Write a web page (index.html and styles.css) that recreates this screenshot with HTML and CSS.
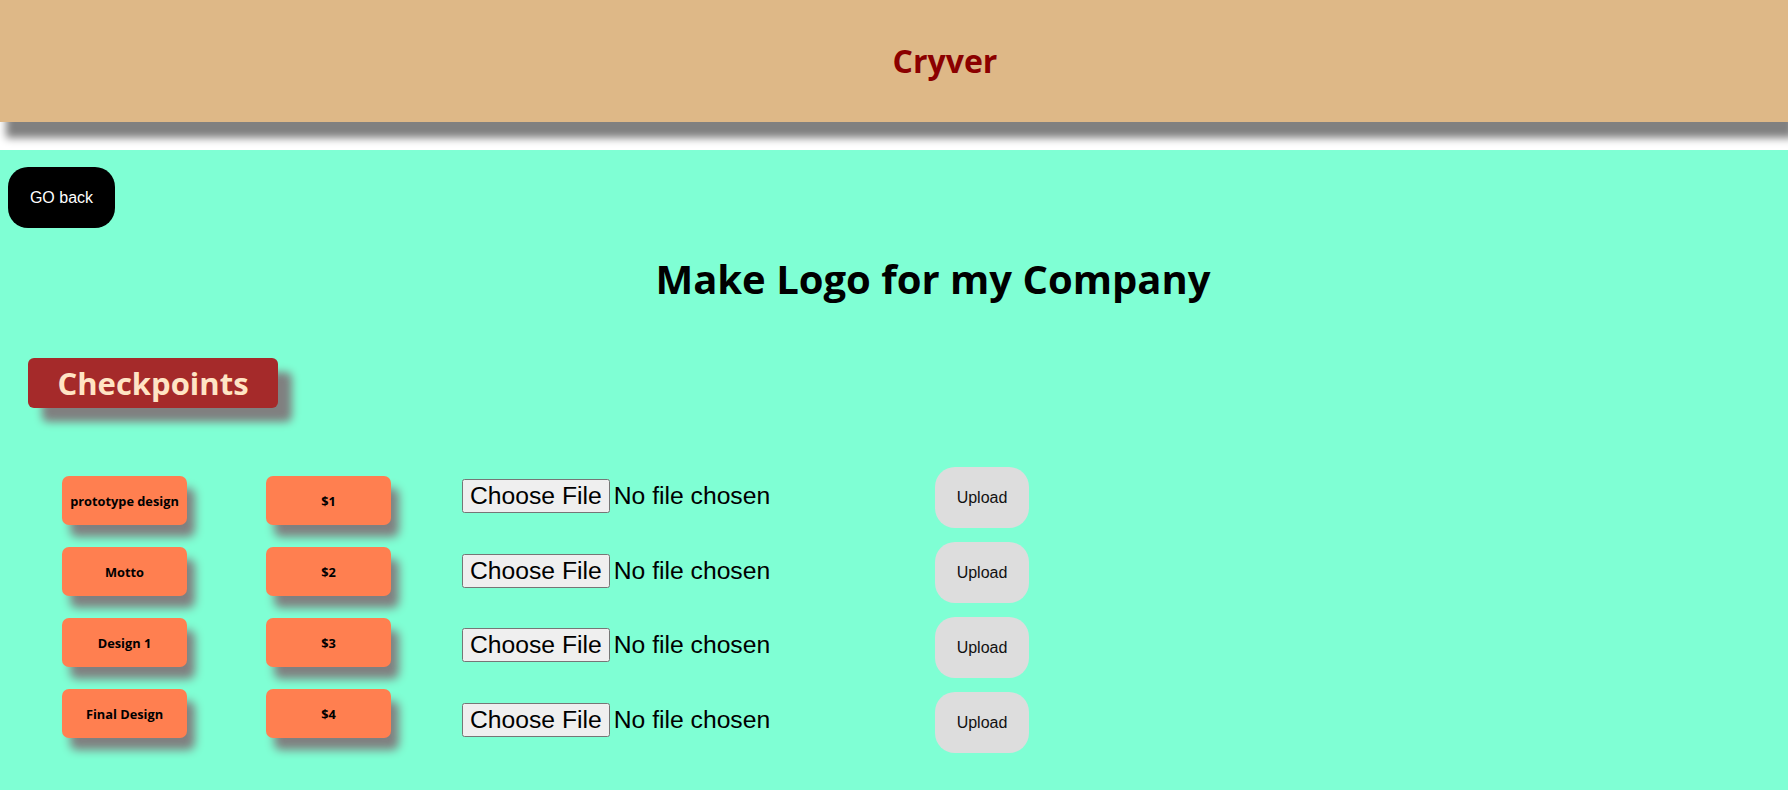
FILE: index.html
```html
<!DOCTYPE html>
<html lang="en">
<head>
<meta charset="utf-8">
<title>Cryver</title>
<link rel="stylesheet" href="styles.css">
</head>
<body>
<header class="topbar">
  <h1 class="brand">Cryver</h1>
</header>
<main class="page">
  <button class="back-btn">GO back</button>
  <h1 class="title">Make Logo for my Company</h1>
  <h2 class="section-tag">Checkpoints</h2>
  <div class="checkpoints">
    <div class="col col-names">
      <div class="chip">prototype design</div>
      <div class="chip">Motto</div>
      <div class="chip">Design 1</div>
      <div class="chip">Final Design</div>
    </div>
    <div class="col col-prices">
      <div class="chip">$1</div>
      <div class="chip">$2</div>
      <div class="chip">$3</div>
      <div class="chip">$4</div>
    </div>
    <div class="col col-files">
      <input type="file" class="file-in">
      <input type="file" class="file-in">
      <input type="file" class="file-in">
      <input type="file" class="file-in">
    </div>
    <div class="col col-uploads">
      <button class="upload-btn">Upload</button>
      <button class="upload-btn">Upload</button>
      <button class="upload-btn">Upload</button>
      <button class="upload-btn">Upload</button>
    </div>
  </div>
</main>
</body>
</html>
```
FILE: styles.css
```css
html, body {
  margin: 0;
  padding: 0;
  background: #ffffff;
}
body {
  font-family: "Open Sans", "Noto Sans", sans-serif;
  min-height: 790px;
  display: flex;
  flex-direction: column;
}
.topbar {
  height: 122px;
  background: #deb887;
  box-shadow: 6px 16px 8px #808080;
  display: flex;
  align-items: center;
  justify-content: center;
  padding-left: 102px;
  box-sizing: border-box;
  position: relative;
  z-index: 1;
}
.brand {
  margin: 0;
  font-size: 32px;
  line-height: 1;
  font-weight: 700;
  color: #8b0000;
}
.page {
  flex: 1;
  margin-top: 28px;
  background: #7fffd4;
  padding: 17px 8px 20px 8px;
}
.back-btn {
  display: block;
  font-family: "Liberation Sans", Arial, sans-serif;
  font-size: 16px;
  line-height: 19px;
  color: #ffffff;
  background: #000000;
  border: none;
  border-radius: 20px;
  padding: 0;
  white-space: nowrap;
  text-align: center;
  width: 107px;
  height: 61px;
}
.title {
  margin: 24px 0 0 0;
  padding-left: 78px;
  text-align: center;
  font-size: 40px;
  line-height: 54px;
  font-weight: 700;
  color: #000000;
}
.section-tag {
  margin: 52px 0 0 20px;
  width: 250px;
  height: 50px;
  box-sizing: border-box;
  display: flex;
  align-items: center;
  justify-content: center;
  background: #a52a2a;
  color: #ffe4c4;
  font-size: 31px;
  font-weight: 700;
  border-radius: 6px;
  box-shadow: 14px 14px 8px #808080;
}
.checkpoints {
  display: flex;
  align-items: flex-start;
  margin-top: 61px;
  padding-left: 54px;
}
.col {
  display: flex;
  flex-direction: column;
}
.col-names,
.col-prices {
  gap: 22px;
  margin-top: 7px;
}
.col-prices {
  margin-left: 79px;
}
.chip {
  width: 125px;
  height: 49px;
  background: #ff7f50;
  border-radius: 7px;
  box-shadow: 8px 12px 10px #808080;
  display: flex;
  align-items: center;
  justify-content: center;
  font-size: 12.8px;
  font-weight: 700;
  color: #000000;
}
.col-files {
  margin-left: 71px;
  margin-top: 10px;
  width: 473px;
  gap: 40.5px;
}
.file-in {
  font-family: "Liberation Sans", Arial, sans-serif;
  font-size: 24.7px;
  color: #000000;
  margin: 0;
  height: 34px;
}
.col-uploads {
  gap: 14px;
  margin-top: -2px;
}
.upload-btn {
  font-family: "Liberation Sans", Arial, sans-serif;
  font-size: 16px;
  line-height: 19px;
  color: #111111;
  background: #dddddd;
  border: none;
  border-radius: 20px;
  padding: 0;
  white-space: nowrap;
  text-align: center;
  width: 94px;
  height: 61px;
}
```
